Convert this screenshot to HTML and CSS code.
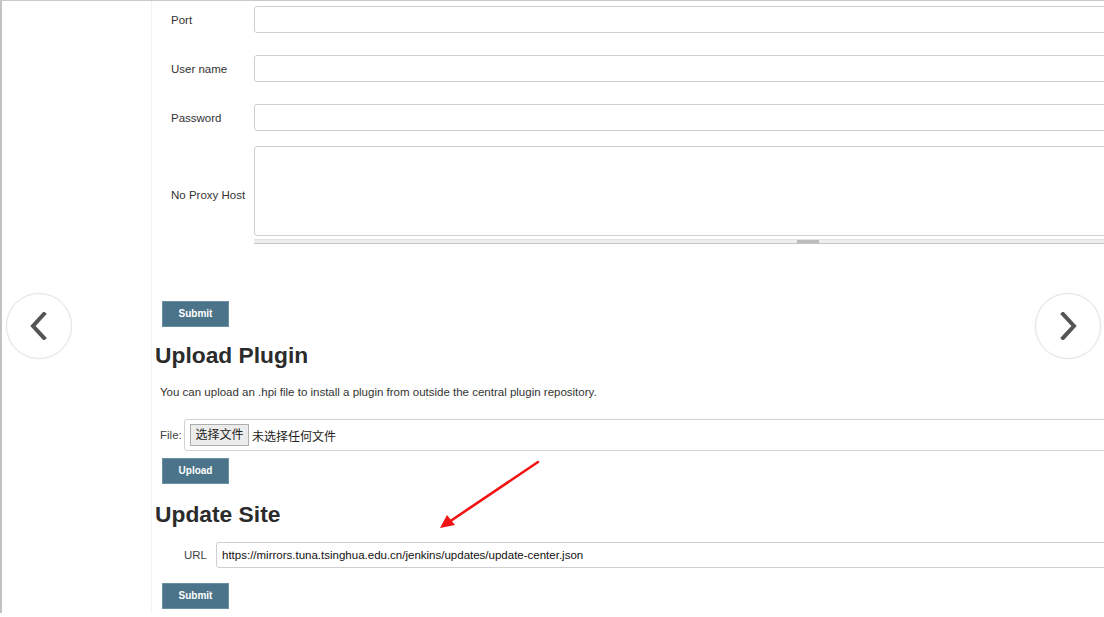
FILE: index.html
```html
<!DOCTYPE html>
<html lang="zh-CN">
<head>
<meta charset="utf-8">
<title>Jenkins Plugin Manager - Advanced</title>
<link rel="stylesheet" href="styles.css">
</head>
<body>
<div class="frame">
  <div class="side"></div>
  <div class="main">
    <div class="row row-first">
      <label class="lbl">Port</label>
      <div class="field"><input class="inp" type="text"></div>
    </div>
    <div class="row">
      <label class="lbl">User name</label>
      <div class="field"><input class="inp" type="text"></div>
    </div>
    <div class="row">
      <label class="lbl">Password</label>
      <div class="field"><input class="inp" type="password"></div>
    </div>
    <div class="row row-area">
      <label class="lbl">No Proxy Host</label>
      <div class="field">
        <div class="area"></div>
        <div class="track"><div class="thumb"></div></div>
      </div>
    </div>
    <button class="btn btn-proxy">Submit</button>

    <h2 class="h2 h2-upload">Upload Plugin</h2>
    <p class="desc">You can upload an .hpi file to install a plugin from outside the central plugin repository.</p>
    <div class="filerow">
      <span class="file-lbl">File:</span>
      <div class="filebox">
        <span class="choose">选择文件</span>
        <span class="nofile">未选择任何文件</span>
      </div>
    </div>
    <button class="btn btn-upload">Upload</button>

    <h2 class="h2 h2-site">Update Site</h2>
    <div class="urlrow">
      <span class="url-lbl">URL</span>
      <div class="urlbox">https://mirrors.tuna.tsinghua.edu.cn/jenkins/updates/update-center.json</div>
    </div>
    <button class="btn btn-site">Submit</button>
  </div>

  <div class="nav nav-left">
    <svg width="20" height="28" viewBox="0 0 20 28"><path d="M15 2 L4 14 L15 26" fill="none" stroke="#555" stroke-width="4" stroke-linecap="square"/></svg>
  </div>
  <div class="nav nav-right">
    <svg width="20" height="28" viewBox="0 0 20 28"><path d="M5 2 L16 14 L5 26" fill="none" stroke="#555" stroke-width="4" stroke-linecap="square"/></svg>
  </div>
  <svg class="redarrow" width="110" height="80" viewBox="0 0 110 80">
    <line x1="103" y1="3" x2="14" y2="63" stroke="#f21414" stroke-width="2.6" stroke-linecap="round"/>
    <polygon points="5,69 12,56 20,66" fill="#f21414"/>
  </svg>
</div>
</body>
</html>
```
FILE: styles.css
```css
html, body {
  margin: 0;
  padding: 0;
  background: #fff;
}
body {
  font-family: "Liberation Sans", Arial, "Noto Sans CJK SC", sans-serif;
  color: #333;
  font-size: 11.5px;
}
.frame {
  position: relative;
  height: 612px;
  width: 1102px;
  border-top: 1px solid #c9c9c9;
  border-left: 2px solid #c2c2c2;
  display: flex;
  overflow: hidden;
}
.side {
  flex: none;
  width: 149px;
  border-right: 1px solid #f2f2f2;
}
.main {
  flex: none;
  width: 1100px;
  display: flex;
  flex-direction: column;
  align-items: flex-start;
}
.row {
  display: flex;
  align-items: center;
  margin-top: 22px;
  width: 100%;
}
.row-first { margin-top: 5px; }
.row-area { margin-top: 15px; }
.lbl {
  flex: none;
  width: 83px;
  padding-left: 19px;
  color: #333;
  font-size: 11.5px;
}
.field {
  flex: 1;
  display: flex;
  flex-direction: column;
}
.inp {
  box-sizing: border-box;
  height: 27px;
  width: 100%;
  border: 1px solid #cfcfcf;
  border-radius: 3px;
  background: #fff;
  margin: 0;
  padding: 0 6px;
}
.area {
  box-sizing: border-box;
  height: 90px;
  border: 1px solid #cfcfcf;
  border-radius: 3px;
}
.track {
  box-sizing: border-box;
  margin-top: 3px;
  height: 5px;
  background: #eeeeee;
  border-top: 1px solid #e2e2e2;
  border-bottom: 1px solid #c4c4c4;
  display: flex;
}
.thumb {
  margin-left: 543px;
  width: 22px;
  height: 3px;
  background: #bdbdbd;
}
.btn {
  box-sizing: border-box;
  width: 67px;
  height: 26px;
  margin-left: 10px;
  padding: 0;
  background: #4b7389;
  border: 1px solid #6a90a4;
  color: #fff;
  font-family: "Liberation Sans", Arial, sans-serif;
  font-weight: bold;
  font-size: 10px;
  line-height: 24px;
  text-align: center;
}
.btn-proxy { margin-top: 57px; }
.btn-upload { margin-top: 7px; }
.btn-site { margin-top: 15px; }
.h2 {
  margin: 0 0 0 3px;
  font-size: 22.8px;
  line-height: 28px;
  font-weight: bold;
  color: #2b2b2b;
}
.h2-upload { margin-top: 14px; }
.h2-site { margin-top: 16px; }
.desc {
  margin: 15px 0 0 8px;
  font-size: 11.5px;
  line-height: 16px;
  color: #333;
}
.filerow {
  margin-top: 19px;
  margin-left: 8px;
  display: flex;
  align-items: center;
  width: 950px;
}
.file-lbl {
  width: 24px;
  color: #444;
}
.filebox {
  box-sizing: border-box;
  flex: 1;
  height: 32px;
  border: 1px solid #d2d2d2;
  border-radius: 3px;
  display: flex;
  align-items: center;
  padding-left: 5px;
}
.choose {
  box-sizing: border-box;
  height: 22px;
  width: 59px;
  border: 1px solid #adadad;
  background: #ececec;
  color: #222;
  text-align: center;
  line-height: 20px;
  font-size: 12px;
}
.nofile {
  margin-left: 3px;
  color: #222;
  font-size: 12px;
}
.urlrow {
  margin-top: 14px;
  margin-left: 32px;
  display: flex;
  align-items: center;
  width: 930px;
}
.url-lbl {
  width: 32px;
  color: #444;
}
.urlbox {
  box-sizing: border-box;
  flex: 1;
  height: 26px;
  border: 1px solid #cfcfcf;
  border-radius: 3px;
  padding-left: 5px;
  line-height: 24px;
  color: #111;
}
.nav {
  position: absolute;
  top: 292px;
  width: 64px;
  height: 64px;
  border-radius: 50%;
  border: 1px solid #e4e4e4;
  background: #fff;
  box-shadow: 0 0 2px rgba(0,0,0,0.06);
  display: flex;
  align-items: center;
  justify-content: center;
}
.nav-left { left: 4px; }
.nav-right { left: 1033px; }
.redarrow {
  position: absolute;
  left: 433px;
  top: 458px;
}
```
